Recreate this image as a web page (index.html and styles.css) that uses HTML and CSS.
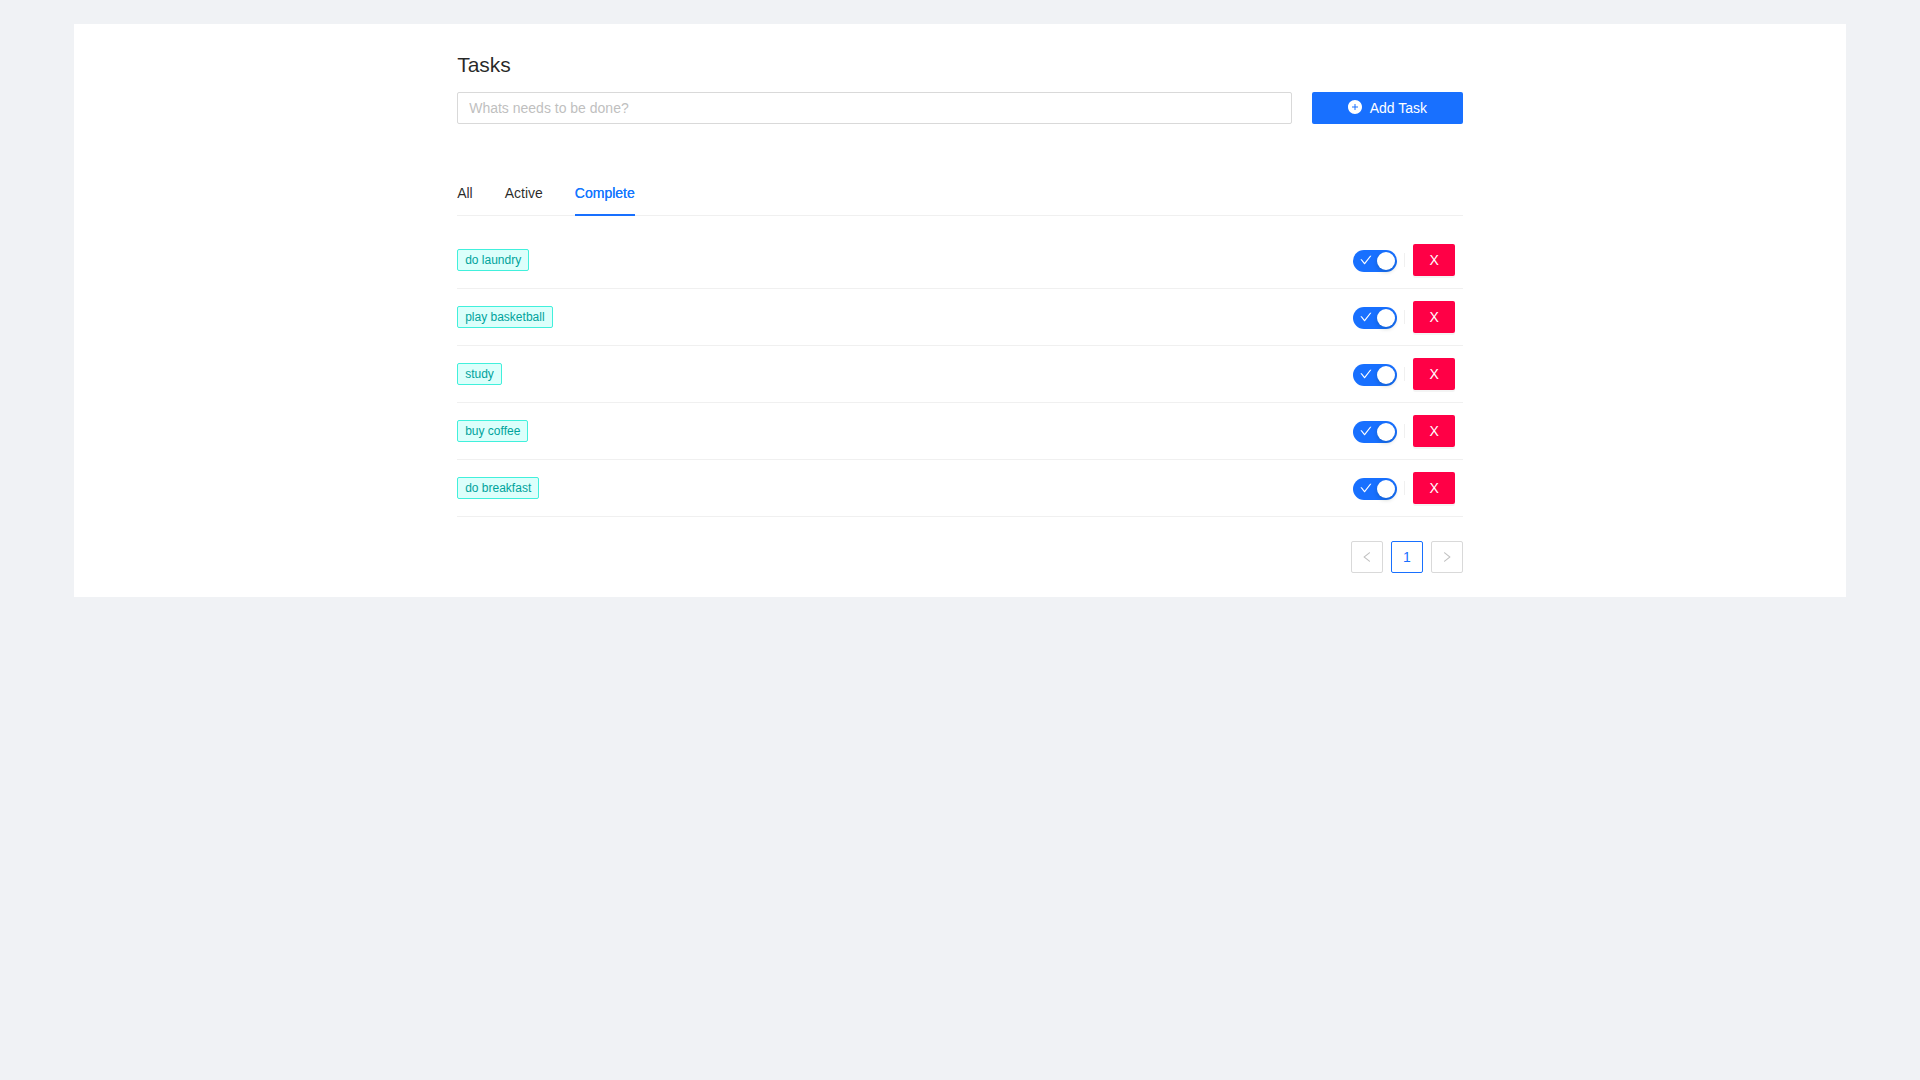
FILE: index.html
```html
<!DOCTYPE html>
<html lang="en">
<head>
<meta charset="utf-8">
<title>Tasks</title>
<link rel="stylesheet" href="styles.css">
</head>
<body>
<svg class="sprite" aria-hidden="true">
  <symbol id="check" viewBox="64 64 896 896"><path d="M912 190h-69.9c-9.8 0-19.1 4.5-25.1 12.2L404.7 724.5 207 474a32 32 0 00-25.1-12.2H112c-6.7 0-10.4 7.7-6.3 12.9l273.9 347c12.8 16.2 37.4 16.2 50.3 0l488.4-618.9c4.1-5.1.4-12.8-6.3-12.8z"/></symbol>
</svg>
<main class="card">
  <div class="content">
    <h1 class="title">Tasks</h1>
    <form class="task-form">
      <input class="task-input" type="text" placeholder="Whats needs to be done?">
      <button class="btn btn-primary" type="button">
        <svg class="btn-icon" viewBox="64 64 896 896"><path d="M512 64C264.6 64 64 264.6 64 512s200.6 448 448 448 448-200.6 448-448S759.4 64 512 64zm192 472c0 4.4-3.6 8-8 8H544v152c0 4.4-3.6 8-8 8h-48c-4.4 0-8-3.6-8-8V544H328c-4.4 0-8-3.6-8-8v-48c0-4.4 3.6-8 8-8h152V328c0-4.4 3.6-8 8-8h48c4.4 0 8 3.6 8 8v152h152c4.4 0 8 3.6 8 8v48z"/></svg>
        <span>Add Task</span>
      </button>
    </form>
    <nav class="tabs">
      <a class="tab">All</a>
      <a class="tab">Active</a>
      <a class="tab tab-active">Complete</a>
    </nav>
    <ul class="list">
      <li class="row"><span class="tag">do laundry</span><div class="actions"><span class="switch"><svg class="switch-icon"><use href="#check"/></svg><i class="knob"></i></span><i class="split"></i><button class="btn btn-danger" type="button">X</button></div></li>
      <li class="row"><span class="tag">play basketball</span><div class="actions"><span class="switch"><svg class="switch-icon"><use href="#check"/></svg><i class="knob"></i></span><i class="split"></i><button class="btn btn-danger" type="button">X</button></div></li>
      <li class="row"><span class="tag">study</span><div class="actions"><span class="switch"><svg class="switch-icon"><use href="#check"/></svg><i class="knob"></i></span><i class="split"></i><button class="btn btn-danger" type="button">X</button></div></li>
      <li class="row"><span class="tag">buy coffee</span><div class="actions"><span class="switch"><svg class="switch-icon"><use href="#check"/></svg><i class="knob"></i></span><i class="split"></i><button class="btn btn-danger" type="button">X</button></div></li>
      <li class="row"><span class="tag">do breakfast</span><div class="actions"><span class="switch"><svg class="switch-icon"><use href="#check"/></svg><i class="knob"></i></span><i class="split"></i><button class="btn btn-danger" type="button">X</button></div></li>
    </ul>
    <div class="pagination">
      <a class="page"><svg class="page-icon" viewBox="64 64 896 896"><path d="M724 218.3V141c0-6.7-7.7-10.4-12.9-6.3L260.3 486.8a31.86 31.86 0 000 50.3l450.8 352.1c5.3 4.1 12.9.4 12.9-6.3v-77.3c0-4.9-2.3-9.6-6.1-12.6l-360-281 360-281.1c3.8-3 6.1-7.7 6.1-12.6z"/></svg></a>
      <a class="page page-active">1</a>
      <a class="page"><svg class="page-icon" viewBox="64 64 896 896"><path d="M765.7 486.8L314.9 134.7A7.97 7.97 0 00302 141v77.3c0 4.9 2.3 9.6 6.1 12.6l360 281.1-360 281.1c-3.9 3-6.1 7.7-6.1 12.6V883c0 6.7 7.7 10.4 12.9 6.3l450.8-352.1a31.96 31.96 0 000-50.4z"/></svg></a>
    </div>
  </div>
</main>
</body>
</html>
```
FILE: styles.css
```css
* { box-sizing: border-box; }

body {
  margin: 0;
  padding: 24px 74px;
  min-height: 100vh;
  background: #f0f2f5;
  color: rgba(0, 0, 0, 0.85);
  font: 14px/22px "Liberation Sans", Arial, sans-serif;
}

.sprite { display: none; }
svg { display: block; fill: currentColor; }

.card { background: #fff; padding: 24px; }
.content { width: 58.3333%; margin: 0 auto; }

.title {
  margin: 0 0 10px;
  font-size: 21px;
  font-weight: 400;
  line-height: 34px;
}

.task-form {
  display: grid;
  grid-template-columns: 1fr 15%;
  gap: 20px;
  margin-bottom: 46px;
}

.task-input {
  width: 100%;
  height: 32px;
  padding: 4px 11px;
  border: 1px solid #d9d9d9;
  border-radius: 2px;
  font: inherit;
}
.task-input::placeholder { color: #bfbfbf; }

.btn {
  display: flex;
  align-items: center;
  justify-content: center;
  gap: 8px;
  height: 32px;
  padding: 0 16px;
  border: 0;
  border-radius: 2px;
  color: #fff;
  font: inherit;
  box-shadow: 0 2px 0 rgba(0, 0, 0, 0.045);
}
.btn-primary { background: #1870ff; box-shadow: none; }
.btn-danger { background: #ff0046; }
.btn-icon { width: 14px; height: 14px; margin-bottom: 2px; }

.tabs {
  display: flex;
  gap: 32px;
  margin-bottom: 16px;
  box-shadow: inset 0 -1px #f0f0f0;
}
.tab { padding: 12px 0; }
.tab-active {
  color: #1677ff;
  text-shadow: 0 0 0.25px currentColor;
  box-shadow: inset 0 -2px #1870ff;
}

.list { list-style: none; margin: 0; padding: 0; }
.row {
  display: flex;
  align-items: center;
  justify-content: space-between;
  height: 57px;
  border-bottom: 1px solid #f0f0f0;
}

.tag {
  padding: 0 7px;
  border: 1px solid #41f0dc;
  border-radius: 2px;
  background: #dcfffb;
  color: #00a39b;
  font-size: 12px;
  line-height: 20px;
}

.actions { display: flex; align-items: center; padding-right: 8px; }
.switch {
  display: flex;
  align-items: center;
  justify-content: space-between;
  width: 44px;
  height: 22px;
  margin-top: 2px;
  padding: 0 2px 0 7px;
  border-radius: 11px;
  background: #1870ff;
  color: #fff;
}
.switch-icon { width: 12px; height: 12px; margin-bottom: 2px; }
.knob {
  width: 18px;
  height: 18px;
  border-radius: 50%;
  background: #fff;
  box-shadow: 0 2px 4px rgba(0, 35, 11, 0.2);
}
.split { width: 1px; height: 14px; margin: 0 8px 0 7px; background: #f0f0f0; }

.pagination {
  display: flex;
  justify-content: flex-end;
  gap: 8px;
  margin-top: 24px;
}
.page {
  display: flex;
  align-items: center;
  justify-content: center;
  width: 32px;
  height: 32px;
  border: 1px solid #d9d9d9;
  border-radius: 2px;
  color: rgba(0, 0, 0, 0.25);
}
.page-active { border-color: #1870ff; color: #1870ff; }
.page-icon { width: 12px; height: 12px; }
```
